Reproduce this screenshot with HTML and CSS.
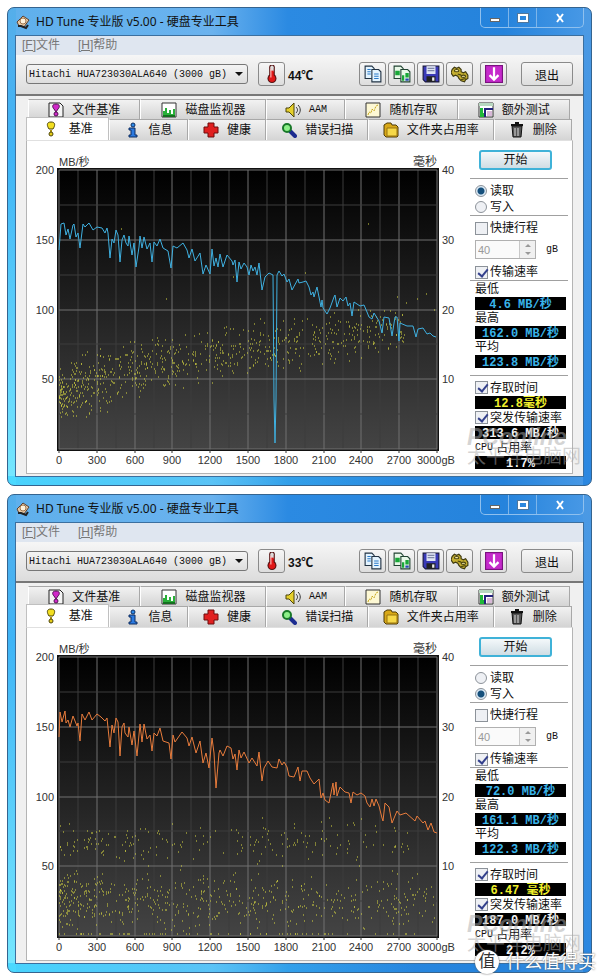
FILE: index.html
```html
<!DOCTYPE html>
<html lang="zh-CN">
<head>
    <meta charset="UTF-8">
    <meta name="viewport" content="width=device-width, initial-scale=1.0">
    <title>HD Tune 专业版 v5.00</title>
    <link rel="stylesheet" href="styles.css">
</head>

<body>
    <!-- 图标 -->
    <svg class="sprite" aria-hidden="true">
        <symbol id="i-disk" viewBox="0 0 16 16">
            <path d="M2 8 8 2l6 4-5 7-5-1z" fill="#e8c9a4" stroke="#5b4030"/>
            <circle cx="8" cy="7" r="3" fill="#fff3dd" stroke="#a0764e"/>
            <path d="M3 12h3l5 2 2-3" fill="none" stroke="#222" stroke-width="2"/>
        </symbol>
        <symbol id="i-thermo" viewBox="0 0 16 16">
            <path d="M8 2v8" stroke="#511" stroke-width="5" stroke-linecap="round"/>
            <circle cx="8" cy="12" r="4" fill="#511"/>
            <path d="M8 2v3" stroke="#ddd" stroke-width="3" stroke-linecap="round"/>
            <path d="M8 5v6" stroke="#e01818" stroke-width="3"/>
            <circle cx="8" cy="12" r="3" fill="#e01818"/>
            <path d="M7 3v8" stroke="#fbb"/>
        </symbol>
        <symbol id="i-copy" viewBox="0 0 16 16">
            <path d="M1 1h6l2 2v9H1z" fill="#e4f4ff" stroke="#234"/>
            <path d="M7 4h6l2 2v9H7z" fill="#e4f4ff" stroke="#234"/>
            <path d="M3 4h3M3 6h3M3 8h3M9 8h4M9 10h4M9 12h4" stroke="#2878c8"/>
        </symbol>
        <symbol id="i-copyimg" viewBox="0 0 16 16">
            <path d="M1 1h6l2 2v9H1z" fill="#e8f8e8" stroke="#243"/>
            <path d="M7 4h6l2 2v9H7z" fill="#e8f8e8" stroke="#243"/>
            <path d="M2 5h4v4H2zM8 9h2v5H8zM11 7h3v4h-3z" fill="#18a838"/>
            <path d="M11 12h3v2h-3z" fill="#2848b0"/>
        </symbol>
        <symbol id="i-save" viewBox="0 0 16 16">
            <path d="M1 1h14v14H3l-2-2z" fill="#3a3ab8" stroke="#181840"/>
            <path d="M4 1h8v7H4z" fill="#dfe4f4"/>
            <path d="M5 3h6M5 5h6" stroke="#8088a8"/>
            <path d="M4 10h8v5H4z" fill="#222"/>
            <path d="M9 11h2v3H9z" fill="#eee"/>
        </symbol>
        <symbol id="i-gear" viewBox="0 0 16 16">
            <path d="M1 4 3 2l2 1 2-1 2 2v2l2 1 2-1 2 3v3l-2 1-1 2-3-1-2-2-1-2-2-1-2 1-2-3z" fill="#c4ae30" stroke="#3f3a10"/>
            <ellipse cx="5" cy="5" rx="2" ry="1" fill="#fff3b0" stroke="#4a4410"/>
            <ellipse cx="11" cy="10" rx="2" ry="1" fill="#fff3b0" stroke="#4a4410"/>
            <path d="m6 8 3 1M9 13l4-1" stroke="#4a4410"/>
        </symbol>
        <symbol id="i-down" viewBox="0 0 16 16">
            <path d="M0 0h16v16H0z" fill="#7a127f"/>
            <path d="M1 1h14v14H1z" fill="#c52acb"/>
            <path d="M8 2v10M4 9l4 4 4-4" fill="none" stroke="#fff" stroke-width="2"/>
        </symbol>
        <symbol id="i-filebench" viewBox="0 0 16 16">
            <path d="M1 1h11l3 3v11H1z" fill="#f4f4f4" stroke="#222"/>
            <path d="M8 2c4 0 4 3 2 5L8 10 6 7C4 5 4 2 8 2z" fill="#d028c8" stroke="#501050"/>
            <circle cx="8" cy="12" r="2" fill="#d028c8" stroke="#501050"/>
        </symbol>
        <symbol id="i-monitor" viewBox="0 0 16 16">
            <path d="M1 1h14v14H1z" fill="#fff" stroke="#333"/>
            <path d="M2 15V9h2V6h2v5h2V8h2v4h2V7h2v8z" fill="#28b038"/>
            <path d="M2 14h12" stroke="#157020" stroke-width="2"/>
        </symbol>
        <symbol id="i-speaker" viewBox="0 0 16 16">
            <path d="M1 6h3l5-5v14l-5-5H1z" fill="#e6d02c" stroke="#4c4408"/>
            <path d="M11 5c2 2 2 4 0 6M13 3c3 3 3 7 0 10" fill="none" stroke="#333"/>
        </symbol>
        <symbol id="i-random" viewBox="0 0 16 16">
            <path d="M1 1h14v14H1z" fill="#fdf8d4" stroke="#333"/>
            <path d="M3 13l1-3 2 1 1-4 2 2 2-5 2-1" fill="none" stroke="#c8a820" stroke-dasharray="2 1"/>
        </symbol>
        <symbol id="i-extra" viewBox="0 0 16 16">
            <path d="M1 1h14v14H1z" fill="#fff" stroke="#333"/>
            <path d="M1 1h14v3H1z" fill="#b8d8c0"/>
            <path d="M2 6v9h5v-4H5V6z" fill="#20b838"/>
            <path d="M7 15V7h8" fill="none" stroke="#22227a" stroke-width="2"/>
            <path d="M9 9h5v5H9z" fill="#d8b8d8"/>
        </symbol>
        <symbol id="i-bench" viewBox="0 0 16 16">
            <path d="M8 1c5 0 4 4 2 7H6C4 5 3 1 8 1z" fill="#f2de20" stroke="#4c4408"/>
            <path d="M7 9h2v2H7z" fill="#a89010"/>
            <circle cx="8" cy="13" r="2" fill="#e4cc18" stroke="#4c4408"/>
        </symbol>
        <symbol id="i-info" viewBox="0 0 16 16">
            <circle cx="8" cy="3" r="2" fill="#2c8ae8" stroke="#0c2c60"/>
            <path d="M4 6h6v7h2v2H4v-2h2V8H4z" fill="#2c7ae0" stroke="#0c2c60"/>
        </symbol>
        <symbol id="i-health" viewBox="0 0 16 16">
            <path d="M5 1h6v4h4v6h-4v4H5v-4H1V5h4z" fill="#e02020" stroke="#6c0c0c"/>
        </symbol>
        <symbol id="i-scan" viewBox="0 0 16 16">
            <path d="m9 9 5 5" stroke="#1c2c90" stroke-width="4" stroke-linecap="round"/>
            <circle cx="6" cy="6" r="4" fill="#8cf088" stroke="#187828" stroke-width="2"/>
        </symbol>
        <symbol id="i-folder" viewBox="0 0 16 16">
            <path d="M1 3 4 1h4l1 2h4l2 2v9l-1 1H3l-2-2z" fill="#d8a818" stroke="#4c3a08"/>
            <path d="M4 6h10v8H4z" fill="#f6d848" stroke="#987410"/>
        </symbol>
        <symbol id="i-trash" viewBox="0 0 16 16">
            <path d="M3 4h10l-1 11H4z" fill="#555" stroke="#111"/>
            <path d="M2 3h12M6 1h4" stroke="#111" stroke-width="2"/>
            <path d="M6 6v8M9 6v8" stroke="#ddd"/>
        </symbol>
    </svg>

    <main class="screens" id="screens"></main>

    <div class="site-mark">
        <span class="site-badge">值</span>
        <span>什么值得买</span>
    </div>

    <template id="windowTemplate">
        <section class="window">
            <header class="titlebar">
                <svg class="icon"><use href="#i-disk"/></svg>
                <h1>HD Tune 专业版 v5.00 - 硬盘专业工具</h1>
                <div class="window-buttons">
                    <button aria-label="最小化"><i class="min"></i></button>
                    <button aria-label="最大化"><i class="max"></i></button>
                    <button aria-label="关闭"><svg viewBox="0 0 10 10"><path d="m2 1 6 8M8 1 2 9"/></svg></button>
                </div>
            </header>

            <div class="client">
                <nav class="menu">
                    <a href="#"><u>[F]</u>文件</a>
                    <a href="#"><u>[H]</u>帮助</a>
                </nav>

                <div class="toolbar">
                    <div class="drive">
                        <select aria-label="硬盘">
                            <option>Hitachi HUA723030ALA640 (3000 gB)</option>
                        </select>
                    </div>
                    <button class="tool" aria-label="温度"><svg class="icon"><use href="#i-thermo"/></svg></button>
                    <span class="temperature"></span>
                    <div class="tools">
                        <button class="tool" aria-label="复制文本"><svg class="icon"><use href="#i-copy"/></svg></button>
                        <button class="tool" aria-label="复制图像"><svg class="icon"><use href="#i-copyimg"/></svg></button>
                        <button class="tool" aria-label="保存"><svg class="icon"><use href="#i-save"/></svg></button>
                        <button class="tool" aria-label="选项"><svg class="icon"><use href="#i-gear"/></svg></button>
                    </div>
                    <button class="tool" aria-label="下载"><svg class="icon"><use href="#i-down"/></svg></button>
                    <button class="exit">退出</button>
                </div>

                <div class="tabs tabs-back">
                    <button class="tab wide"><svg class="icon"><use href="#i-filebench"/></svg>文件基准</button>
                    <button class="tab wider"><svg class="icon"><use href="#i-monitor"/></svg>磁盘监视器</button>
                    <button class="tab narrow"><svg class="icon"><use href="#i-speaker"/></svg><span class="mono">AAM</span></button>
                    <button class="tab wide"><svg class="icon"><use href="#i-random"/></svg>随机存取</button>
                    <button class="tab wide"><svg class="icon"><use href="#i-extra"/></svg>额外测试</button>
                </div>
                <div class="tabs tabs-front">
                    <button class="tab active"><svg class="icon"><use href="#i-bench"/></svg>基准</button>
                    <button class="tab narrow"><svg class="icon"><use href="#i-info"/></svg>信息</button>
                    <button class="tab narrow"><svg class="icon"><use href="#i-health"/></svg>健康</button>
                    <button class="tab medium"><svg class="icon"><use href="#i-scan"/></svg>错误扫描</button>
                    <button class="tab wider"><svg class="icon"><use href="#i-folder"/></svg>文件夹占用率</button>
                    <button class="tab narrow"><svg class="icon"><use href="#i-trash"/></svg>删除</button>
                </div>

                <div class="panel">
                    <svg class="chart" viewBox="0 0 443 332" role="img" aria-label="基准测试"></svg>

                    <aside class="side">
                        <button class="start">开始</button>
                        <div class="group">
                            <label class="row"><input type="radio" value="read">读取</label>
                            <label class="row"><input type="radio" value="write">写入</label>
                        </div>
                        <div class="group stroke">
                            <label class="row"><input type="checkbox">快捷行程</label>
                            <div class="spin-row">
                                <div class="spin">
                                    <input type="text" value="40" disabled aria-label="快捷行程 gB">
                                    <span class="arrows"><i class="up"></i><i class="down"></i></span>
                                </div>
                                <span class="unit">gB</span>
                            </div>
                            <label class="row"><input type="checkbox" checked>传输速率</label>
                        </div>
                        <div class="group rates">
                            <span class="name">最低</span><output data-key="min"></output>
                            <span class="name">最高</span><output data-key="max"></output>
                            <span class="name">平均</span><output data-key="avg"></output>
                        </div>
                        <div class="group others">
                            <label class="row"><input type="checkbox" checked>存取时间</label>
                            <output class="yellow" data-key="access"></output>
                            <label class="row"><input type="checkbox" checked>突发传输速率</label>
                            <output class="white" data-key="burst"></output>
                            <span class="row"><span class="mono">CPU</span>&nbsp;占用率</span>
                            <output class="white" data-key="cpu"></output>
                        </div>
                    </aside>
                </div>
            </div>

            <div class="press-mark"><b>PConline</b><span>太平洋电脑网</span></div>
        </section>
    </template>

    <script src="script.js"></script>
</body>
</html>
```
FILE: styles.css
```css
* { margin: 0; padding: 0; box-sizing: border-box; }

body {
    position: relative;
    padding: 7px 8px 7px 7px;
    background: #ffffff;
    color: #111111;
    font-family: "Liberation Sans", "Noto Sans CJK SC", sans-serif;
    font-size: 12px;
}

button, input, select { font: inherit; color: inherit; }

.sprite { display: none; }
.icon { width: 16px; height: 16px; flex: none; }
.mono { font-family: "Liberation Mono", "Noto Sans CJK SC", monospace; font-size: 10px; }

.screens {
    display: flex;
    flex-direction: column;
    gap: 8px;
}

.window {
    position: relative;
    padding: 0 7px 8px;
    border: 1px solid #35648f;
    border-radius: 7px;
    background:
        linear-gradient(90deg, rgba(70, 215, 255, 0.9), rgba(70, 180, 255, 0) 70%) bottom / 100% 9px no-repeat,
        linear-gradient(180deg, #55aeea, #3fb4f6 30%, #76e8ff) left / 8px 100% no-repeat,
        linear-gradient(180deg, #4c9ae4, #2b87e0) right / 8px 100% no-repeat,
        linear-gradient(90deg, #5fb0ec, #6ab2ee 35%, #2b8ae2 48%, #2583dc 85%, #4a9ae6);
}

/* 标题栏 */
.titlebar {
    display: flex;
    align-items: center;
    gap: 5px;
    height: 27px;
}

.titlebar h1 {
    flex: 1;
    font-family: "Noto Sans", "Noto Sans CJK SC", sans-serif;
    font-size: 12px;
    font-weight: normal;
    line-height: 20px;
    white-space: nowrap;
}

.window-buttons {
    display: flex;
    align-self: flex-start;
    height: 20px;
    border: 1px solid #8fc0ee;
    border-top: 0;
    border-radius: 0 0 5px 5px;
}

.window-buttons button {
    display: flex;
    align-items: center;
    justify-content: center;
    width: 28px;
    border: 0;
    border-right: 1px solid #7db5ea;
    background: none;
}

.window-buttons button:last-child { width: 46px; border-right: 0; }
.window-buttons svg { width: 10px; height: 10px; stroke: #ffffff; stroke-width: 2; }
.min { width: 10px; height: 4px; margin-top: 4px; background: #ffffff; border: 1px solid #666666; }
.max { width: 10px; height: 8px; border: 2px solid #ffffff; outline: 1px solid #50779c; }

/* 窗口内容 */
.client {
    padding-bottom: 2px;
    border: 1px solid #3b6f9f;
    background: #f0f0f0;
}

.menu {
    display: flex;
    gap: 18px;
    height: 19px;
    padding-left: 6px;
    background: #dfe6f0;
    line-height: 19px;
}

.menu a { color: #777777; text-decoration: none; }

.toolbar {
    display: flex;
    align-items: center;
    height: 41px;
    padding: 0 10px 1px;
    border-bottom: 2px solid #777777;
    background: linear-gradient(#f6f6f6, #dcdcdc);
}

.drive { position: relative; flex: 0 1 222px; margin-right: 10px; }

.drive select {
    display: block;
    width: 100%;
    height: 20px;
    padding: 0 2px;
    appearance: none;
    border: 1px solid #777777;
    border-radius: 3px;
    background: linear-gradient(#f4f4f4, #dddddd);
    font-family: "Liberation Mono", monospace;
    font-size: 10px;
}

.drive::after {
    content: "";
    position: absolute;
    top: 8px;
    right: 5px;
    border: 4px solid transparent;
    border-top-color: #111111;
}

.tool, .exit {
    display: flex;
    align-items: center;
    justify-content: center;
    width: 27px;
    height: 24px;
    border: 1px solid #8a8a8a;
    border-radius: 3px;
    background: linear-gradient(#f6f6f6, #dddddd);
}

.tool .icon { width: 18px; height: 18px; }
.exit { width: 52px; margin-left: 14px; font-size: 12px; }
.temperature { flex: 1; padding-left: 3px; font-weight: bold; }
.tools { display: flex; gap: 2px; margin-right: 7px; }

/* 选项卡 */
.tabs { display: flex; }
.tabs-back { margin: 3px 13px 0 12px; }
.tabs-front { margin: 0 11px 0 10px; }

.tab {
    display: flex;
    align-items: center;
    justify-content: center;
    gap: 8px;
    height: 20px;
    border: 1px solid #a8a8a8;
    border-left-color: #ffffff;
    border-bottom: 0;
    background: linear-gradient(#f2f2f2, #d4d4d4);
    line-height: 18px;
    white-space: nowrap;
}

.tabs-front .tab { height: 21px; }

.tab.narrow { flex: 78 1 0; }
.tab.medium { flex: 102 1 0; }
.tab.wide { flex: 112 1 0; }
.tab.wider { flex: 126 1 0; }

.tabs-front .tab.active {
    flex: 83 1 0;
    height: 23px;
    margin-top: -2px;
    gap: 10px;
    border-color: #c0c0c0;
    background: #ffffff;
}

/* 面板 */
.panel {
    display: flex;
    margin: 0 10px;
    border: 1px solid #b4b4b4;
    border-top-color: #e0e0e0;
    background: #ffffff;
}

.chart {
    flex: 1;
    min-width: 0;
    align-self: flex-start;
    font-size: 11px;
}

.chart text { fill: #333333; }
.side { flex: 0 0 102px; padding: 9px 4px 0 0; }

.start {
    display: block;
    width: 73px;
    height: 20px;
    margin: 0 0 8px 9px;
    border: 2px solid #3fb2d8;
    border-radius: 3px;
    background: linear-gradient(#f4f8fa, #cfdde4);
    line-height: 15px;
}

.group { padding: 4px 0 0 5px; border-top: 1px solid #a0a0a0; }

.row {
    display: flex;
    align-items: center;
    height: 16px;
    line-height: 16px;
    white-space: nowrap;
}

.row input {
    appearance: none;
    flex: none;
    width: 13px;
    height: 13px;
    margin-right: 2px;
    border: 1px solid #8c9299;
    background: #eef0f4;
}

.row input[type="radio"] { width: 12px; height: 12px; margin-right: 3px; border-radius: 50%; }
.row input[type="radio"]:checked { background: radial-gradient(circle, #16507c 3px, #dbeaf6 4px); }

.row input[type="checkbox"]:checked::before {
    content: "";
    display: block;
    width: 4px;
    height: 8px;
    margin: 0 0 0 4px;
    border: solid #33408c;
    border-width: 0 2px 2px 0;
    transform: rotate(40deg);
}

.spin-row {
    display: flex;
    align-items: center;
    justify-content: space-between;
    margin: 4px 0 5px;
    padding-right: 10px;
}

.spin {
    display: flex;
    width: 61px;
    height: 19px;
    border: 1px solid #b0b0b0;
}

.spin input {
    flex: 1;
    min-width: 0;
    padding-left: 2px;
    border: 0;
    background: #fafafa;
    color: #999999;
    font-size: 11px;
}

.arrows {
    display: flex;
    flex-direction: column;
    align-items: center;
    justify-content: space-around;
    width: 16px;
    border-left: 1px solid #c8c8c8;
    background: #f0f0f0;
}

.arrows i { border: 3px solid transparent; }
.arrows .up { border-top: 0; border-bottom-color: #999999; }
.arrows .down { border-bottom: 0; border-top-color: #999999; }
.unit { font-family: "Liberation Mono", monospace; font-size: 10px; }

.rates { padding-top: 0; padding-bottom: 7px; }
.others { padding-top: 3px; }
.others .row { height: 17px; }
.name { display: block; height: 16px; line-height: 16px; }

output {
    display: block;
    width: 91px;
    height: 13px;
    background: #000000;
    color: #39b4ea;
    font-family: "Liberation Mono", "Noto Sans CJK SC", monospace;
    font-size: 12px;
    font-weight: bold;
    line-height: 16px;
    text-align: center;
    white-space: pre;
}

output.yellow { color: #f0f02c; }
output.white { color: #f4f4f4; }

/* 水印 */
.press-mark {
    position: absolute;
    right: 0;
    bottom: 18px;
    display: flex;
    flex-direction: column;
    width: 124px;
    color: rgba(170, 170, 170, 0.5);
    line-height: 20px;
    white-space: nowrap;
    pointer-events: none;
}

.press-mark b { font-size: 23px; font-style: italic; }
.press-mark span { font-size: 19px; }

.site-mark {
    position: absolute;
    right: 4px;
    bottom: 6px;
    display: flex;
    align-items: center;
    gap: 7px;
    color: #ffffff;
    font-size: 18px;
    line-height: 24px;
    text-shadow: 0 0 2px #555555;
    white-space: nowrap;
}

.site-badge {
    width: 24px;
    height: 24px;
    border-radius: 50%;
    background: #ffffff;
    color: #333333;
    font-size: 17px;
    line-height: 23px;
    text-align: center;
    text-shadow: none;
    box-shadow: 0 0 2px #555555;
}
```
FILE: script.js
```js
const PLOT_W = 378;
const PLOT_H = 279;

const runs = [
    {
        mode: 'read',
        temperature: '44℃',
        color: '#3fb0e0',
        values: { min: '4.6 MB/秒', max: '162.0 MB/秒', avg: '123.8 MB/秒', access: '12.8毫秒', burst: '313.6 MB/秒', cpu: '1.7%' },
        line: '0,80 2,54 5,53 7,65 9,59 11,69 14,55 15,54 17,67 19,63 21,78 24,54 26,57 30,53 34,60 38,57 43,58 46,63 48,58 49,63 51,88 53,69 55,73 57,60 59,65 61,92 63,70 65,65 67,73 69,76 70,66 73,85 75,73 77,97 80,77 81,66 83,78 85,67 88,79 91,73 93,92 95,72 98,76 101,69 104,78 109,81 112,98 114,76 118,78 124,73 128,80 130,88 133,79 136,91 141,83 144,104 147,95 151,104 153,79 155,96 157,88 159,97 161,84 164,97 168,85 173,91 174,95 176,90 178,112 180,92 182,99 185,93 188,97 190,105 192,95 194,101 196,97 198,105 200,93 203,120 206,107 210,103 214,105 215,230 216,273 217,230 218,105 220,101 223,106 225,104 228,112 230,109 233,120 239,109 240,113 244,112 247,111 250,117 252,125 254,122 255,127 258,117 262,137 263,130 264,138 268,144 271,138 275,127 276,125 278,137 281,128 284,131 287,127 289,136 291,133 293,146 295,132 301,136 305,135 308,142 310,147 313,149 315,143 320,151 323,163 325,147 330,148 333,166 336,147 338,147 340,171 341,153 348,156 354,156 357,167 359,159 364,158 368,164 371,163 374,166 377,167',
        scatter: readScatter
    },
    {
        mode: 'write',
        temperature: '33℃',
        color: '#e87c3c',
        values: { min: '72.0 MB/秒', max: '161.1 MB/秒', avg: '122.3 MB/秒', access: '6.47 毫秒', burst: '187.0 MB/秒', cpu: '2.2%' },
        line: '0,80 1,55 3,65 6,54 7,66 9,63 11,70 14,59 18,69 19,66 21,84 23,57 26,63 30,55 33,63 38,57 42,60 46,64 48,61 51,90 53,68 55,76 57,61 59,65 61,99 63,70 65,66 66,76 69,80 70,70 73,88 75,74 78,99 81,67 83,85 85,67 88,82 91,78 93,94 95,76 98,79 101,71 104,84 110,86 112,102 114,78 116,85 123,75 128,81 130,89 133,80 137,96 141,84 144,106 147,96 150,111 153,81 155,96 157,131 160,96 161,93 164,99 168,89 172,91 174,102 176,97 178,113 180,93 182,101 185,95 190,106 193,101 198,109 200,95 203,124 205,111 209,104 213,110 218,111 220,102 223,108 225,105 228,110 230,119 235,120 239,110 241,124 243,114 248,114 251,121 255,127 260,122 262,141 264,136 266,143 270,146 274,126 275,138 277,125 278,139 281,130 286,135 290,136 292,146 294,135 298,138 302,136 306,139 308,146 311,150 313,142 315,149 317,142 320,149 323,161 324,164 326,146 330,150 333,166 338,154 341,158 347,156 356,164 358,159 364,166 366,164 369,173 372,166 375,175 378,176',
        scatter: writeScatter
    }
];

// 固定种子，保证每次散点一致
function createRandom(seed) {
    return function () {
        seed = (seed * 1664525 + 1013904223) % 4294967296;
        return seed / 4294967296;
    };
}

function readScatter(random) {
    const points = [[62, 59], [107, 129], [309, 54], [246, 103], [174, 107], [338, 127], [367, 124], [358, 129], [347, 133], [375, 140]];
    for (let i = 0; i < 780; i++) {
        const x = Math.pow(random(), 1.5) * 345;
        const top = 200 - 68 * Math.sqrt(x / 345);
        const bottom = 256 - 34 * Math.min(1, x / 130) - Math.max(0, x - 130) * 0.16;
        points.push([x, top + (bottom - top) * (random() * 0.6 + random() * 0.4)]);
    }
    return points;
}

function writeScatter(random) {
    const points = [];
    for (let i = 0; i < 560; i++) {
        const x = Math.pow(random(), 1.5) * 376;
        points.push([x, 244 + (random() + random() + random() - 1.5) * 24]);
    }
    for (let i = 0; i < 160; i++) {
        points.push([Math.pow(random(), 1.2) * 350, 186 + (random() + random() - 1) * 20]);
    }
    for (let i = 0; i < 60; i++) {
        points.push([random() * 330, 160 + random() * 75]);
    }
    for (let i = 0; i < 65; i++) {
        points.push([Math.pow(random(), 1.3) * 376, 277]);
    }
    return points;
}

function drawChart(svg, run, index) {
    let grid = '';
    let labels = '';

    for (let i = 0; i <= 20; i++) {
        const x = Math.round(i * PLOT_W / 20);
        grid += `<path d="M${x} 0V${PLOT_H}" stroke="${i % 2 ? '#3c3c3c' : '#707070'}"/>`;
        if (i % 2 === 0) {
            grid += `<path d="M${x} ${PLOT_H}v4" stroke="#333"/>`;
            if (i < 20) {
                labels += `<text x="${x}" y="294" text-anchor="middle">${i * 150}</text>`;
            }
        }
    }
    for (let i = 0; i <= 8; i++) {
        const y = Math.round(i * PLOT_H / 8);
        grid += `<path d="M0 ${y}H${PLOT_W}" stroke="${i % 2 ? '#3c3c3c' : '#707070'}"/>`;
        if (i % 2 === 0 && i < 8) {
            labels += `<text x="-5" y="${y + 4}" text-anchor="end">${200 - i * 25}</text>`;
            labels += `<text x="383" y="${y + 4}">${40 - i * 5}</text>`;
        }
    }
    labels += '<text x="358" y="294">3000gB</text>';
    labels += '<text x="0" y="-4">MB/秒</text>';
    labels += '<text x="378" y="-4" font-size="12" text-anchor="end">毫秒</text>';

    const dots = run.scatter(createRandom(index + 7))
        .map(([x, y]) => `M${Math.round(x)} ${Math.round(y)}h1`)
        .join('');

    svg.innerHTML = `
        <defs>
            <linearGradient id="plot${index}" x2="0" y2="1">
                <stop offset="0" stop-color="#000"/>
                <stop offset="1" stop-color="#444"/>
            </linearGradient>
        </defs>
        <g transform="translate(32 29)">
            <rect x="-1" y="-1" width="380" height="281" fill="url(#plot${index})" stroke="#111" stroke-width="2"/>
            ${grid}
            <path d="${dots}" stroke="#d8d840"/>
            <polyline points="${run.line}" fill="none" stroke="${run.color}" stroke-linejoin="round"/>
            ${labels}
        </g>`;
}

const template = document.getElementById('windowTemplate');
const screens = document.getElementById('screens');

runs.forEach((run, index) => {
    const node = template.content.cloneNode(true);

    node.querySelector('.temperature').textContent = run.temperature;
    node.querySelectorAll('input[type="radio"]').forEach(radio => {
        radio.name = 'mode' + index;
        radio.checked = radio.value === run.mode;
    });
    node.querySelectorAll('output').forEach(output => {
        output.textContent = run.values[output.dataset.key];
    });
    drawChart(node.querySelector('.chart'), run, index);

    screens.appendChild(node);
});
```
